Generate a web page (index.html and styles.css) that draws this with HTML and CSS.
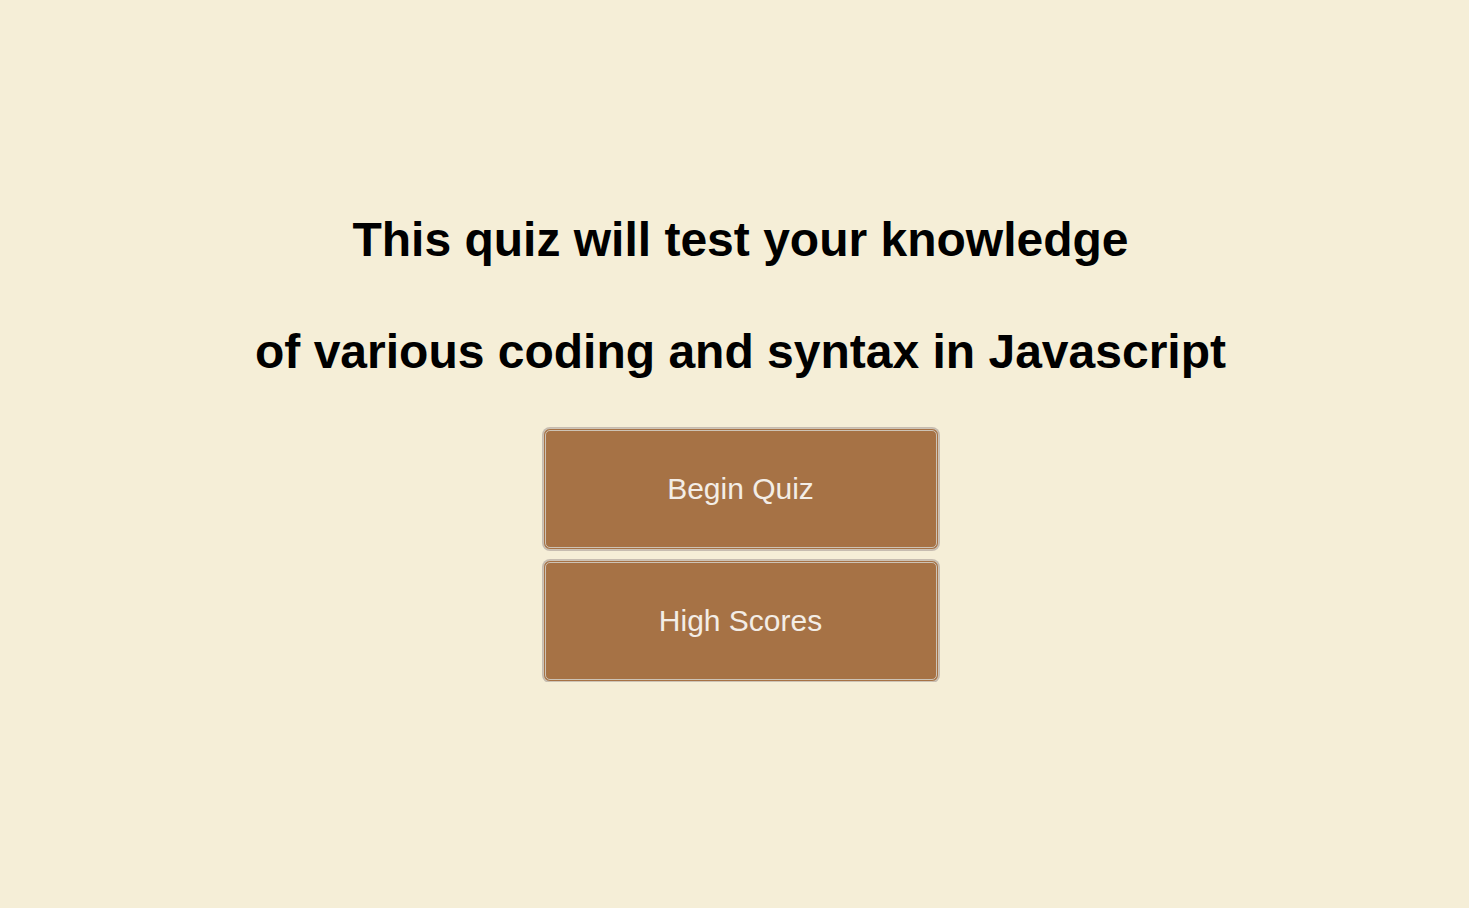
FILE: index.html
```html
<!DOCTYPE html>
<html>
<head>
<meta charset="utf-8">
<link rel="stylesheet" href="styles.css">
</head>
<body>
<main class="intro">
  <h1 class="title"><span class="line">This quiz will test your knowledge</span><span class="line">of various coding and syntax in Javascript</span></h1>
  <div class="actions">
    <button class="btn">Begin Quiz</button>
    <button class="btn">High Scores</button>
  </div>
</main>
</body>
</html>
```
FILE: styles.css
```css
html, body {
  margin: 0;
  padding: 0;
  background: #f5eed7;
  font-family: "Liberation Sans", Arial, Helvetica, sans-serif;
}
.intro {
  display: flex;
  flex-direction: column;
  align-items: center;
  padding-top: 184px;
  padding-left: 12px;
}
.title {
  margin: 0;
  font-size: 48px;
  font-weight: bold;
  color: #000;
  text-align: center;
  display: flex;
  flex-direction: column;
  align-items: center;
  line-height: 112px;
}
.actions {
  display: flex;
  flex-direction: column;
  gap: 10px;
  margin-top: 20px;
}
.btn {
  width: 396px;
  height: 122px;
  background: #a67245;
  color: #f3ede6;
  font-family: "Liberation Sans", Arial, Helvetica, sans-serif;
  font-size: 30px;
  border: 3px double #cdc3b6;
  box-shadow: 0 0 0 1px #c6bcb0;
  border-radius: 7px;
  padding: 0;
  cursor: pointer;
}
```
